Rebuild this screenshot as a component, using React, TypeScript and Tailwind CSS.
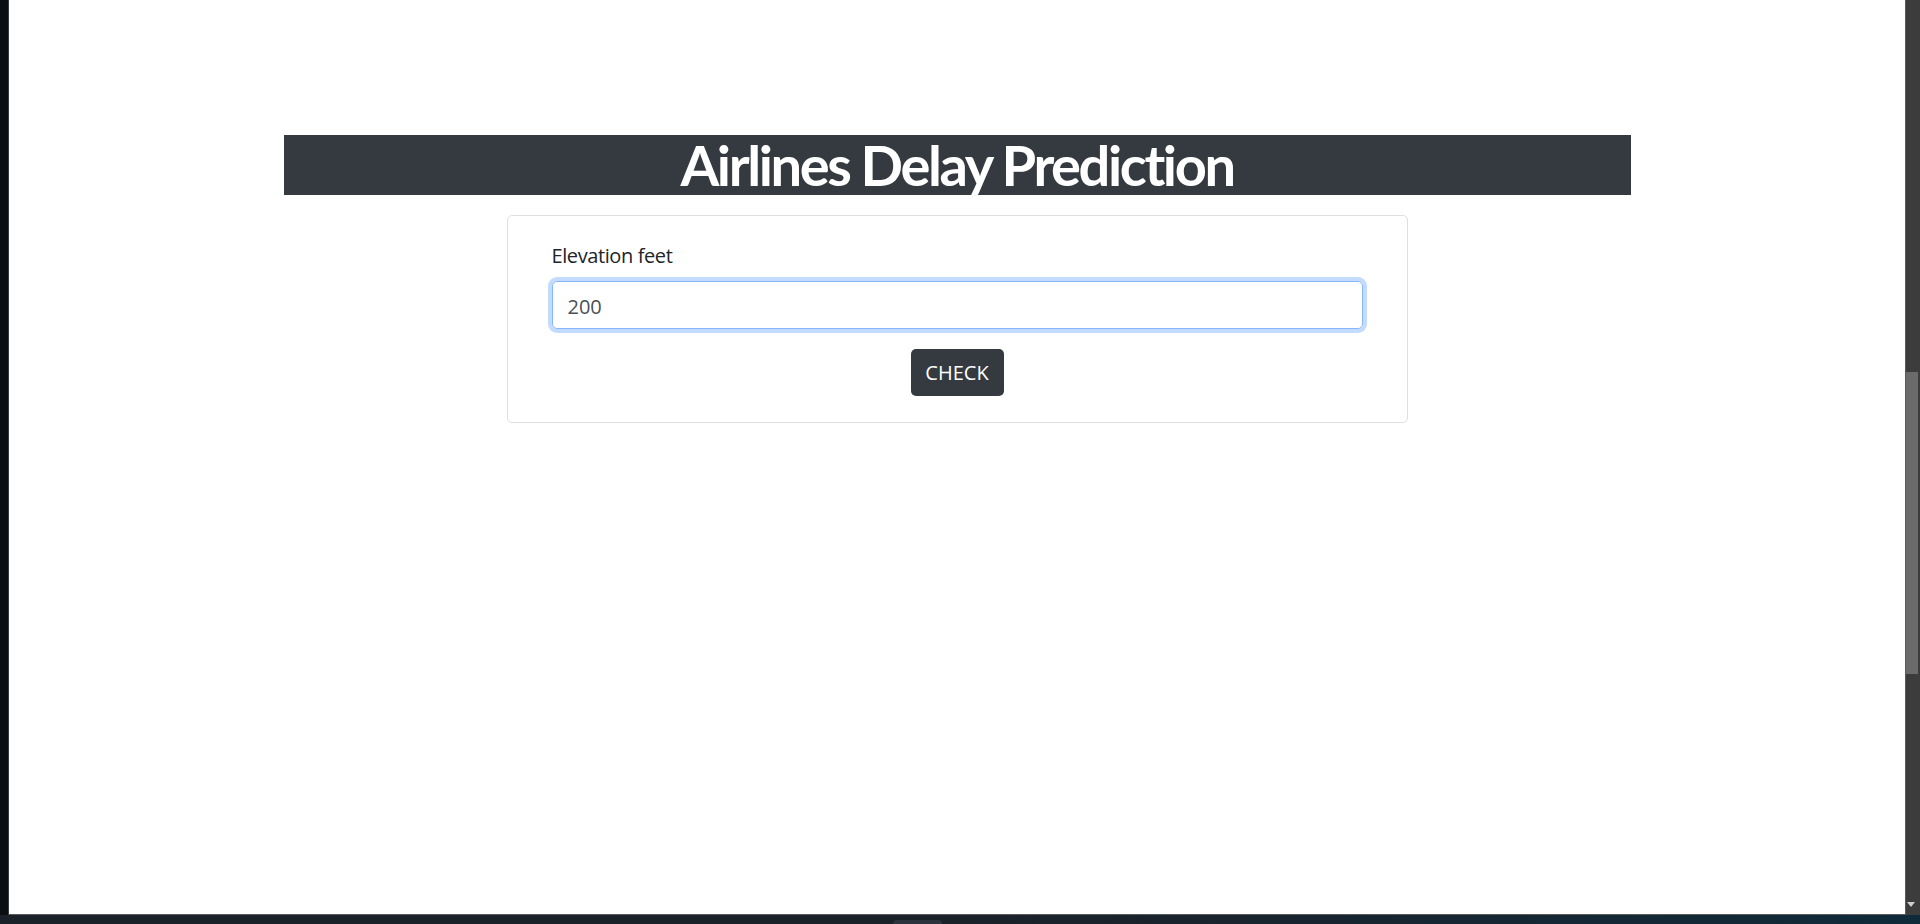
import React from "react";

const font = { fontFamily: '"Open Sans", "Noto Sans", sans-serif' };
const titleFont = { fontFamily: 'Lato, "Open Sans", sans-serif' };

const PredictionForm = () => {
  return (
    <div className="mx-auto mt-[20px] w-[901px] rounded-[5px] border border-[#dfdfdf] bg-white px-[44px] pt-[25px] pb-[26px]">
      <label className="mb-[10px] block text-[20px] leading-[30px] tracking-[-0.4px] text-[#212529]">
        Elevation feet
      </label>
      <input
        className="block h-[48px] w-full rounded-[5px] border border-[#86b7fe] px-[15px] pt-[2px] text-[20px] text-[#495057] shadow-[0_0_0_4px_rgba(13,110,253,0.25)] outline-none"
        defaultValue="200"
        style={font}
      />
      <div className="mt-[20px] flex justify-center">
        <button className="h-[47px] w-[93px] rounded-[5px] bg-[#343a40] text-[20px] text-white">
          CHECK
        </button>
      </div>
    </div>
  );
};

export default function App() {
  return (
    <div className="flex h-[924px] w-[1920px] flex-col overflow-hidden bg-[#0b0f14]" style={font}>
      <div className="flex h-[915px]">
        <div className="w-[9px] border-r border-[#3a3d41] bg-[#0b0f14]"></div>
        <div className="flex-1 border-b border-[#5a5a5a] bg-white pt-[135px]">
          <div className="mx-auto h-[60px] w-[1347px] bg-[#343a40]">
            <h1
              className="text-center text-[56px] font-bold leading-[60px] tracking-[-2.4px] text-white"
              style={titleFont}
            >
              Airlines Delay Prediction
            </h1>
          </div>
          <PredictionForm />
        </div>
        <div className="flex w-[15px] flex-col border-l border-[#5a5a5a] bg-[#3c3c3c]">
          <div className="h-[372px]"></div>
          <div className="h-[302px] w-[12px] bg-[#6b6b6b]"></div>
          <div className="flex-1"></div>
          <svg width="8" height="5" viewBox="0 0 8 5" className="mb-[8px] ml-[1px]">
            <path d="M0 0 H8 L4 5 Z" fill="#d0d0d0" />
          </svg>
        </div>
      </div>
      <div className="flex flex-1 items-end bg-gradient-to-r from-[#1b2129] via-[#1b2129] to-[#0f2a3a]">
        <div className="ml-[893px] h-[4px] w-[49px] rounded-t-[4px] bg-[#2c333c]"></div>
      </div>
    </div>
  );
}
